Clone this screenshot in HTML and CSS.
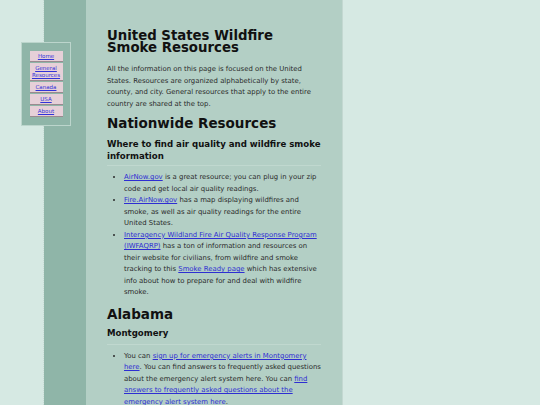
FILE: index.html
```html
<!DOCTYPE html>
<html lang="en">
<head>
<meta charset="utf-8">
<title>United States Wildfire Smoke Resources</title>
<link rel="stylesheet" href="styles.css">
</head>
<body>
<div class="page">
  <div class="side"></div>
  <main class="main">
    <h1>United States Wildfire Smoke Resources</h1>
    <p class="intro">All the information on this page is focused on the United States. Resources are organized alphabetically by state, county, and city. General resources that apply to the entire country are shared at the top.</p>
    <h2>Nationwide Resources</h2>
    <h3>Where to find air quality and wildfire smoke information</h3>
    <ul>
      <li><a href="#">AirNow.gov</a> is a great resource; you can plug in your zip code and get local air quality readings.</li>
      <li><a href="#">Fire.AirNow.gov</a> has a map displaying wildfires and smoke, as well as air quality readings for the entire United States.</li>
      <li><a href="#">Interagency Wildland Fire Air Quality Response Program (IWFAQRP)</a> has a ton of information and resources on their website for civilians, from wildfire and smoke tracking to this <a href="#">Smoke Ready page</a> which has extensive info about how to prepare for and deal with wildfire smoke.</li>
    </ul>
    <h2 class="state">Alabama</h2>
    <h3 class="city">Montgomery</h3>
    <ul>
      <li>You can <a href="#">sign up for emergency alerts in Montgomery here</a>. You can find answers to frequently asked questions about the emergency alert system here. You can <a href="#">find answers to frequently asked questions about the emergency alert system here</a>.</li>
    </ul>
  </main>
</div>
<nav class="nav">
  <a href="#" class="nav-item">Home</a>
  <a href="#" class="nav-item">General Resources</a>
  <a href="#" class="nav-item">Canada</a>
  <a href="#" class="nav-item">USA</a>
  <a href="#" class="nav-item">About</a>
</nav>
</body>
</html>
```
FILE: styles.css
```css
html, body {
  margin: 0;
  padding: 0;
  background: #d6e9e3;
  font-family: "DejaVu Sans", Verdana, sans-serif;
  color: #2a2a2a;
  overflow: hidden;
  height: 405px;
}
.page {
  margin-left: 43px;
  width: 298px;
  min-height: 405px;
  display: flex;
  border-left: 1px dotted #c9dcd6;
  border-right: 1px solid #c3d8d1;
}
.side {
  width: 42px;
  flex: none;
  background: #8fb5a8;
}
.main {
  flex: 1;
  background: #b3cfc5;
  padding: 30px 21px 0 21px;
}
h1 {
  font-size: 13.3px;
  line-height: 11.5px;
  margin: 0 0 11px;
  font-weight: bold;
  color: #111;
}
.intro {
  font-size: 6.9px;
  line-height: 11.6px;
  margin: 0 0 5px;
}
h2 {
  font-size: 13.5px;
  line-height: 16px;
  margin: 0 0 7px;
  font-weight: bold;
  color: #111;
}
h2.state {
  margin-bottom: 5px;
}
h3 {
  font-size: 8.6px;
  line-height: 12px;
  margin: 0;
  padding-bottom: 3px;
  border-bottom: 1px solid #c0d8cf;
  font-weight: bold;
  color: #111;
}
h3.city {
  padding-bottom: 5px;
}
ul {
  margin: 6px 0 7px;
  padding-left: 17px;
  font-size: 6.9px;
  line-height: 11.5px;
}
a { color: #2e2ed2; }
.nav {
  position: absolute;
  left: 21px;
  top: 42px;
  width: 50px;
  height: 84px;
  background: #8fb5a8;
  border: 1px solid #bcd5cc;
  display: flex;
  flex-direction: column;
  align-items: center;
  padding-top: 8px;
  box-sizing: border-box;
  gap: 1px;
}
.nav-item {
  display: block;
  width: 33px;
  background: #e6d0d8;
  text-align: center;
  font-size: 5.5px;
  line-height: 7px;
  padding: 1.5px 0;
  color: #3232d8;
  border-bottom: 1px solid #9a8a90;
}
```
